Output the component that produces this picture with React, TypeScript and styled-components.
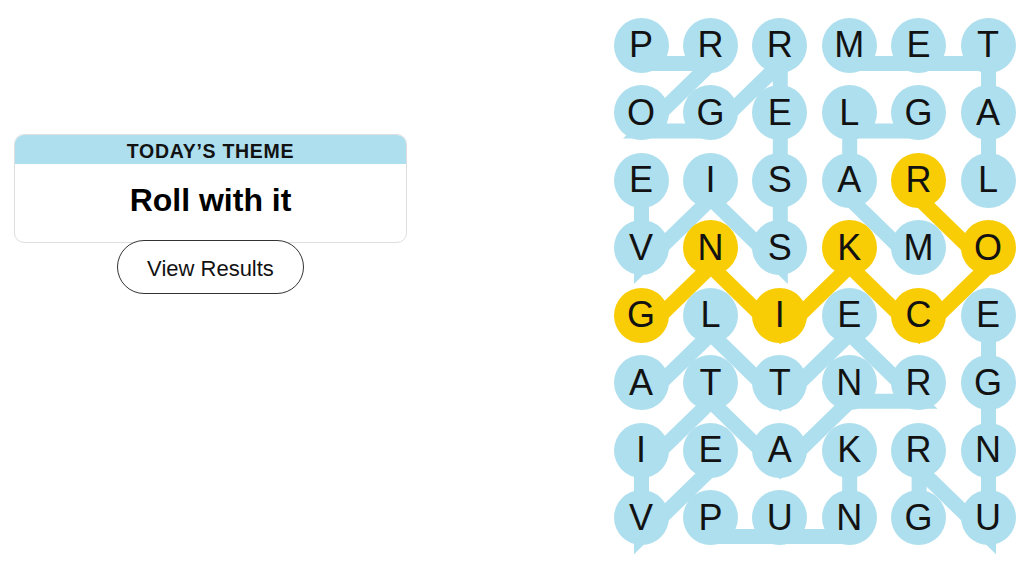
import React from "react";
import styled, { createGlobalStyle } from "styled-components";

type Cell = [number, number];

interface Word {
	path: Cell[],
	spangram?: boolean
}

const BLUE = "#aedfee";
const YELLOW = "#f8cd05";

const TILE = 55;
const COL_STEP = 69.4;
const ROW_STEP = 67.57;
// the connector layer sits a little lower than the tiles
const LINE_SHIFT = 18;

const rows = [
	"PRRMET",
	"OGELGA",
	"EISARL",
	"VNSKMO",
	"GLIECE",
	"ATTNRG",
	"IEAKRN",
	"VPUNGU",
];

const words: Word[] = [
	{ path: [[0,0],[0,1],[1,0],[1,1],[0,2],[1,2],[2,2],[3,2],[2,1],[3,0],[2,0]] },
	{ path: [[0,3],[0,4],[0,5],[1,5],[2,5]] },
	{ path: [[1,4],[1,3],[2,3],[3,4]] },
	{ path: [[5,0],[4,1],[5,2],[4,3],[5,4],[5,3],[6,2],[5,1],[6,0],[7,0],[6,1]] },
	{ path: [[7,1],[7,2],[7,3],[6,3]] },
	{ path: [[7,4],[6,4],[7,5],[6,5],[5,5],[4,5]] },
	{ path: [[2,4],[3,5],[4,4],[3,3],[4,2],[3,1],[4,0]], spangram: true },
];

const cellKey = (r:number, c:number) => `${r}-${c}`;

const foundMap: Record<string, "word" | "span"> = {};
words.forEach(w => {
	w.path.forEach(([r, c]) => {
		foundMap[cellKey(r, c)] = w.spangram ? "span" : "word";
	});
});

const toPoints = (path: Cell[]) =>
	path
		.map(([r, c]) => `${TILE / 2 + c * COL_STEP},${TILE / 2 + r * ROW_STEP + LINE_SHIFT}`)
		.join(" ");

const App = () => {
	return (
		<>
			<GlobalStyle />
			<Page>
				<Sidebar>
					<ThemeCard>
						<ThemeHeader>TODAY’S THEME</ThemeHeader>
						<ThemeTitle>Roll with it</ThemeTitle>
					</ThemeCard>
					<ResultsButton>View Results</ResultsButton>
				</Sidebar>
				<BoardArea>
					<Board>
						<Connectors>
							{words.map((w, i) => (
								<polyline
									key={i}
									points={toPoints(w.path)}
									fill="none"
									stroke={w.spangram ? YELLOW : BLUE}
									strokeWidth={15}
									strokeLinejoin="miter"
									strokeLinecap="butt"
								/>
							))}
						</Connectors>
						{rows.map((row, r) =>
							row.split("").map((letter, c) => (
								<Tile key={cellKey(r, c)} $state={foundMap[cellKey(r, c)]}>
									{letter}
								</Tile>
							))
						)}
					</Board>
				</BoardArea>
			</Page>
		</>
	);
};

export default App;

const GlobalStyle = createGlobalStyle`
	html, body {
		margin: 0;
		padding: 0;
		background: #fff;
	}
	body {
		font-family: "Liberation Sans", Arial, sans-serif;
		color: #121212;
	}
`;

const Page = styled.div`
	display: flex;
	width: 1031px;
	height: 580px;
	overflow: hidden;
`;

const Sidebar = styled.div`
	width: 393px;
	padding: 134px 0 0 14px;
	display: flex;
	flex-direction: column;
	align-items: center;
`;

const ThemeCard = styled.div`
	width: 100%;
	box-sizing: border-box;
	border: 1px solid #dedede;
	border-radius: 10px;
	overflow: hidden;
	background: #fff;
`;

const ThemeHeader = styled.div`
	height: 29px;
	background: ${BLUE};
	display: flex;
	align-items: center;
	justify-content: center;
	padding-top: 4px;
	box-sizing: border-box;
	font-size: 19.5px;
	font-weight: 700;
	letter-spacing: 0.7px;
`;

const ThemeTitle = styled.div`
	height: 78px;
	display: flex;
	align-items: center;
	justify-content: center;
	padding-bottom: 6px;
	box-sizing: border-box;
	font-size: 32px;
	font-weight: 700;
	color: #000;
`;

const ResultsButton = styled.button`
	margin-top: -3px;
	width: 187px;
	height: 54px;
	border: 1px solid #333;
	border-radius: 27px;
	background: #fff;
	font-family: "Liberation Sans", Arial, sans-serif;
	font-size: 22px;
	color: #121212;
	padding: 4px 0 0;
	cursor: pointer;
`;

const BoardArea = styled.div`
	margin-left: auto;
	padding: 17.5px 15.5px 0 0;
`;

const Board = styled.div`
	position: relative;
	display: grid;
	grid-template-columns: repeat(6, ${TILE}px);
	grid-auto-rows: ${TILE}px;
	column-gap: ${COL_STEP - TILE}px;
	row-gap: ${ROW_STEP - TILE}px;
`;

const Connectors = styled.svg`
	position: absolute;
	left: 0;
	top: 0;
	width: 100%;
	height: 100%;
	overflow: visible;
	z-index: 0;
`;

const Tile = styled.div<{ $state?: "word" | "span" }>`
	position: relative;
	z-index: 1;
	width: ${TILE}px;
	height: ${TILE}px;
	border-radius: 50%;
	background: ${p => (p.$state === "span" ? YELLOW : p.$state === "word" ? BLUE : "transparent")};
	display: flex;
	align-items: center;
	justify-content: center;
	font-size: 36px;
	color: #121212;
	line-height: 1;
`;
